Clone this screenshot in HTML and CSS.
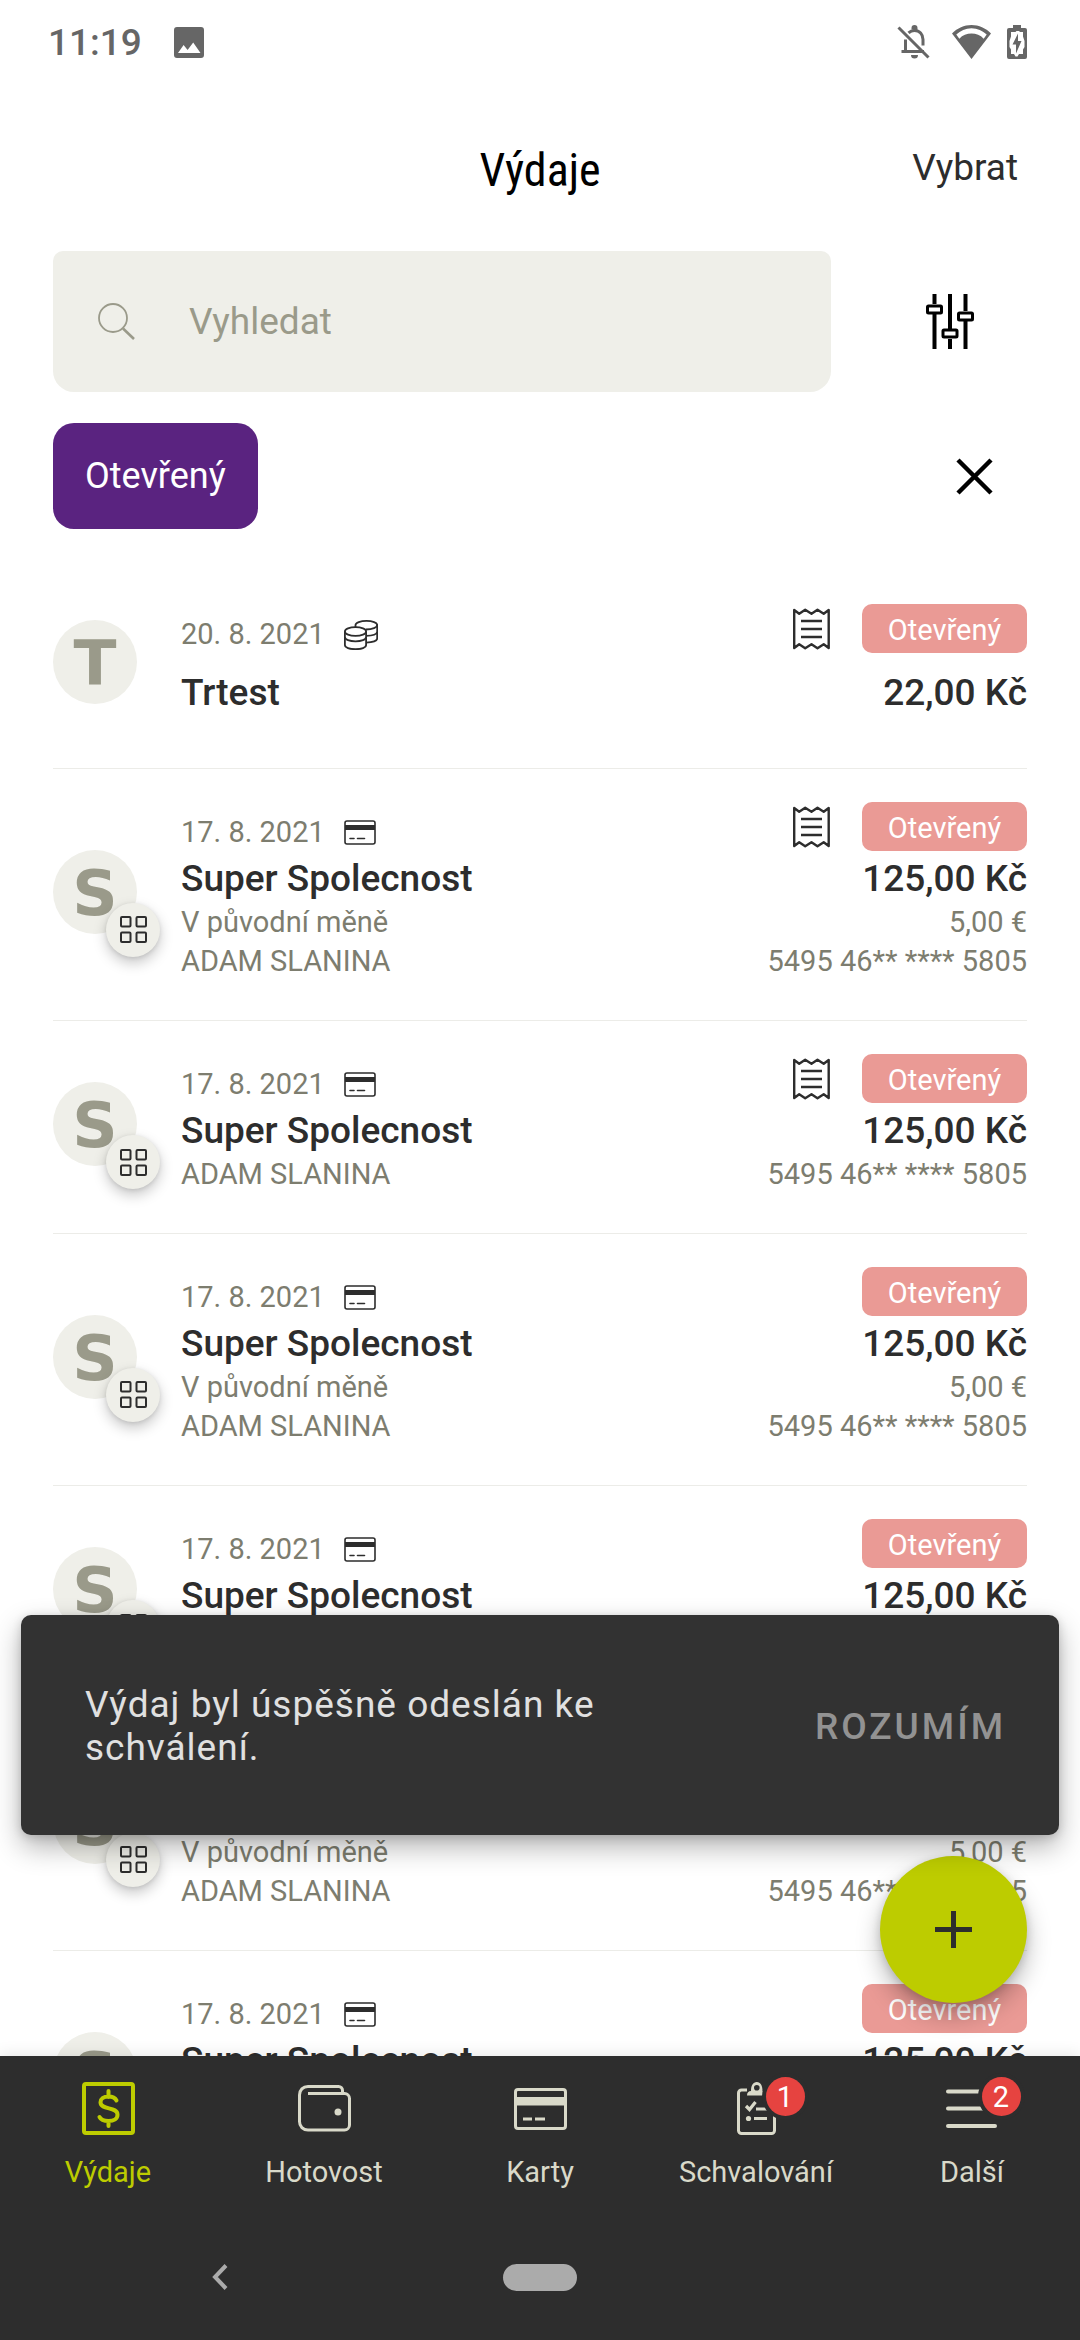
FILE: index.html
```html
<!DOCTYPE html>
<html lang="cs">
<head>
<meta charset="utf-8">
<meta name="viewport" content="width=device-width, initial-scale=1">
<title>Výdaje</title>
<link rel="stylesheet" href="styles.css">
</head>
<body>
<svg class="sprite" aria-hidden="true">
  <symbol id="i-card" viewBox="0 0 32 25">
    <rect x="1" y="1" width="30" height="23" rx="2" fill="none" stroke="currentColor" stroke-width="1.6"/>
    <path d="M1 5h30v5H1z" fill="currentColor"/>
    <path d="M6 18.500h4M13.500 18.500h7" fill="none" stroke="currentColor" stroke-width="1.600" stroke-linecap="round"/>
  </symbol>
  <symbol id="i-coins" viewBox="0 0 34 30">
    <g fill="none" stroke="currentColor" stroke-width="1.800">
      <ellipse cx="11.500" cy="11.500" rx="10.600" ry="4.400"/>
      <path d="M.9 11.500V25c0 2.500 4.700 4.200 10.600 4.200S22.100 27.500 22.100 25V11.500"/>
      <path d="M.9 17c0 2.500 4.700 4.300 10.600 4.300S22.100 19.500 22.100 17"/>
      <path d="M11.500 7.100V5C11.500 2.600 16.500.9 22.500.9S33.200 2.600 33.200 5s-4.500 4.500-11.500 4.500"/>
      <path d="M33.200 5v13.500c0 2.300-4.500 4-11 4.100M33.200 11.500c0 2.500-4.500 4.200-11 4.400"/>
    </g>
  </symbol>
  <symbol id="i-receipt" viewBox="0 0 37 42">
    <path d="M1.200 2l5 3.800 6-4 6.300 4 6-4 6.200 4 5-3.800v38l-5-3.800-6.200 4-6-4-6.300 4-6-4-5 3.800z" fill="none" stroke="currentColor" stroke-width="2.400" stroke-linejoin="round"/>
    <path d="M8 13h21M8 21h21M8 29h21" fill="none" stroke="currentColor" stroke-width="2.400"/>
  </symbol>
  <symbol id="i-grid" viewBox="0 0 27 27">
    <g fill="none" stroke="currentColor" stroke-width="2">
      <rect x="1" y="1" width="9.500" height="9.500" rx="1"/><rect x="16.500" y="1" width="9.500" height="9.500" rx="1"/>
      <rect x="1" y="16.500" width="9.500" height="9.500" rx="1"/><rect x="16.500" y="16.500" width="9.500" height="9.500" rx="1"/>
    </g>
  </symbol>
</svg>

<div class="app">
  <div class="status">
    <span class="status-time">11:19</span>
    <svg class="status-photo" width="30" height="31" viewBox="0 0 30 31"><path fill-rule="evenodd" fill="currentColor" d="M3 0h24a3 3 0 0 1 3 3v25a3 3 0 0 1-3 3H3a3 3 0 0 1-3-3V3a3 3 0 0 1 3-3zM4 26h22.500l-7.300-10.500-5.600 7.500-4-5z"/></svg>
    <div class="status-icons">
      <svg class="status-bell" width="33" height="34" viewBox="0 0 33 34"><g fill="none" stroke="currentColor" stroke-width="3"><path d="M1.500 2.500l30 30"/><path d="M8.500 27V14.500M11.500 7.800c2-1.800 3.500-2.300 6-2.300 5 0 8.500 3.800 8.500 9V20.500M4.500 26.500h22.500" /></g><path fill="currentColor" d="M14.500 4.500V3a3 3 0 0 1 6 0v2.500zM14 30h7a3.500 3.500 0 0 1-7 0z"/></svg>
      <svg width="39" height="34" viewBox="0 0 39 34"><path fill="currentColor" fill-rule="evenodd" d="M19.500 34L0 8.500C5.500 3 12 0 19.500 0S33.500 3 39 8.500zM4.300 9.500l3 4.200C10.500 10 15 8.500 19.500 8.500s9 1.500 12.200 5.200l3-4.200C30.500 5.700 25.500 3.300 19.500 3.300S8.500 5.700 4.300 9.500z"/></svg>
      <svg width="20" height="34" viewBox="0 0 20 34"><path fill="currentColor" fill-rule="evenodd" d="M6 0h8v3h4a2 2 0 0 1 2 2v27a2 2 0 0 1-2 2H2a2 2 0 0 1-2-2V5a2 2 0 0 1 2-2h4zM4 7v4.500L2.500 16v6L4 24.500V29h3l1.500 2.500h2L12 29h4v-4.500l1.500-2.500v-6L16 11.500V7h-3l-1-1H9.500L8.500 7z"/><path fill="currentColor" d="M11 8.500v7.500h3.500L9 28.500v-9H5.500z"/></svg>
    </div>
  </div>

  <header class="header">
    <h1 class="title">Výdaje</h1>
    <button class="select" type="button">Vybrat</button>
  </header>

  <div class="search-row">
    <label class="search">
      <svg width="37" height="37" viewBox="0 0 37 37"><g fill="none" stroke="currentColor"><circle cx="15" cy="15" r="14" stroke-width="1.800"/><path d="M25 25.500L36 36" stroke-width="2.600"/></g></svg>
      <input type="search" placeholder="Vyhledat" aria-label="Vyhledat">
    </label>
    <button class="filter" type="button" aria-label="Filtr">
      <svg width="48" height="55" viewBox="0 0 48 55"><path d="M8.500 0v10M8.500 20v35M24 0v35M24 45v10M39.500 0v17M39.500 27v28" fill="none" stroke="currentColor" stroke-width="4"/><g fill="#fff" stroke="currentColor" stroke-width="3"><rect x="1.500" y="12" width="14" height="7" rx="1"/><rect x="17" y="36" width="14" height="7" rx="1"/><rect x="32.500" y="19" width="14" height="7" rx="1"/></g></svg>
    </button>
  </div>

  <div class="chips">
    <button class="chip" type="button">Otevřený</button>
    <button class="clear" type="button" aria-label="Zrušit filtr">
      <svg width="37" height="37" viewBox="0 0 37 37"><path d="M2 2l33 33M35 2L2 35" fill="none" stroke="currentColor" stroke-width="4.500"/></svg>
    </button>
  </div>

  <main class="content">
    <ul class="list">
      <li class="item item-cash">
        <div class="avatar">T</div>
        <div class="info">
          <div class="line head"><span class="date">20. 8. 2021 <svg width="34" height="30"><use href="#i-coins"/></svg></span><span class="state"><svg width="37" height="42"><use href="#i-receipt"/></svg><span class="badge">Otevřený</span></span></div>
          <div class="line name"><span>Trtest</span><span>22,00 Kč</span></div>
        </div>
      </li>
      <li class="item">
        <div class="avatar">S<span class="mark"><svg width="27" height="27"><use href="#i-grid"/></svg></span></div>
        <div class="info">
          <div class="line head"><span class="date">17. 8. 2021 <svg width="32" height="25"><use href="#i-card"/></svg></span><span class="state"><svg width="37" height="42"><use href="#i-receipt"/></svg><span class="badge">Otevřený</span></span></div>
          <div class="line name"><span>Super Spolecnost</span><span>125,00 Kč</span></div>
          <div class="line sub"><span>V původní měně</span><span>5,00 €</span></div>
          <div class="line sub"><span>ADAM SLANINA</span><span>5495 46** **** 5805</span></div>
        </div>
      </li>
      <li class="item">
        <div class="avatar">S<span class="mark"><svg width="27" height="27"><use href="#i-grid"/></svg></span></div>
        <div class="info">
          <div class="line head"><span class="date">17. 8. 2021 <svg width="32" height="25"><use href="#i-card"/></svg></span><span class="state"><svg width="37" height="42"><use href="#i-receipt"/></svg><span class="badge">Otevřený</span></span></div>
          <div class="line name"><span>Super Spolecnost</span><span>125,00 Kč</span></div>
          <div class="line sub"><span>ADAM SLANINA</span><span>5495 46** **** 5805</span></div>
        </div>
      </li>
      <li class="item">
        <div class="avatar">S<span class="mark"><svg width="27" height="27"><use href="#i-grid"/></svg></span></div>
        <div class="info">
          <div class="line head"><span class="date">17. 8. 2021 <svg width="32" height="25"><use href="#i-card"/></svg></span><span class="state"><span class="badge">Otevřený</span></span></div>
          <div class="line name"><span>Super Spolecnost</span><span>125,00 Kč</span></div>
          <div class="line sub"><span>V původní měně</span><span>5,00 €</span></div>
          <div class="line sub"><span>ADAM SLANINA</span><span>5495 46** **** 5805</span></div>
        </div>
      </li>
      <li class="item">
        <div class="avatar">S<span class="mark"><svg width="27" height="27"><use href="#i-grid"/></svg></span></div>
        <div class="info">
          <div class="line head"><span class="date">17. 8. 2021 <svg width="32" height="25"><use href="#i-card"/></svg></span><span class="state"><span class="badge">Otevřený</span></span></div>
          <div class="line name"><span>Super Spolecnost</span><span>125,00 Kč</span></div>
          <div class="line sub"><span>ADAM SLANINA</span><span>5495 46** **** 5805</span></div>
        </div>
      </li>
      <li class="item">
        <div class="avatar">S<span class="mark"><svg width="27" height="27"><use href="#i-grid"/></svg></span></div>
        <div class="info">
          <div class="line head"><span class="date">17. 8. 2021 <svg width="32" height="25"><use href="#i-card"/></svg></span><span class="state"><span class="badge">Otevřený</span></span></div>
          <div class="line name"><span>Super Spolecnost</span><span>125,00 Kč</span></div>
          <div class="line sub"><span>V původní měně</span><span>5,00 €</span></div>
          <div class="line sub"><span>ADAM SLANINA</span><span>5495 46** **** 5805</span></div>
        </div>
      </li>
      <li class="item">
        <div class="avatar">S<span class="mark"><svg width="27" height="27"><use href="#i-grid"/></svg></span></div>
        <div class="info">
          <div class="line head"><span class="date">17. 8. 2021 <svg width="32" height="25"><use href="#i-card"/></svg></span><span class="state"><span class="badge">Otevřený</span></span></div>
          <div class="line name"><span>Super Spolecnost</span><span>125,00 Kč</span></div>
          <div class="line sub"><span>V původní měně</span><span>5,00 €</span></div>
          <div class="line sub"><span>ADAM SLANINA</span><span>5495 46** **** 5805</span></div>
        </div>
      </li>
    </ul>
    <button class="fab" type="button" aria-label="Přidat výdaj">
      <svg width="37" height="37" viewBox="0 0 37 37"><path d="M18.500 0v37M0 18.500h37" fill="none" stroke="currentColor" stroke-width="5"/></svg>
    </button>
    <div class="snackbar" role="status">
      <p class="snackbar-text">Výdaj byl úspěšně odeslán ke schválení.</p>
      <button class="snackbar-action" type="button">ROZUMÍM</button>
    </div>
  </main>

  <footer class="footer">
    <nav class="tabs">
      <a class="tab tab-active" href="#vydaje">
        <span class="tab-icon"><svg width="53" height="53" viewBox="0 0 53 53"><g fill="none" stroke="currentColor" stroke-width="4"><rect x="2" y="2" width="49" height="49" rx="2"/><path d="M34.500 18.500C33 15.500 30.500 14.500 26.500 14.500c-5 0-8 2.300-8 5.700 0 8.300 17 4 17 12.500 0 4-3.500 6.300-9 6.300-4.500 0-7.500-1-9-4M26.500 9v6M26.500 39v5" stroke-linecap="round"/></g></svg></span>
        Výdaje
      </a>
      <a class="tab" href="#hotovost">
        <span class="tab-icon"><svg width="53" height="47" viewBox="0 0 53 47"><g fill="none" stroke="currentColor" stroke-width="3"><path d="M10 8.500h36.500a5 5 0 0 1 5 5V40a5 5 0 0 1-5 5H10c-5 0-8.500-3.500-8.500-8.500V10c0-5 3.500-8.500 8.500-8.500h30.500a4 4 0 0 1 4 4v3"/></g><circle cx="40" cy="27" r="3.500" fill="currentColor"/></svg></span>
        Hotovost
      </a>
      <a class="tab" href="#karty">
        <span class="tab-icon"><svg width="53" height="42" viewBox="0 0 53 42"><rect x="1.500" y="1.500" width="50" height="39" rx="2.500" fill="none" stroke="currentColor" stroke-width="3"/><path d="M1 9h51v8.500H1z" fill="currentColor"/><path d="M9 31h9M21 31h10" fill="none" stroke="currentColor" stroke-width="3"/></svg></span>
        Karty
      </a>
      <a class="tab" href="#schvalovani">
        <span class="tab-icon"><svg width="39" height="53" viewBox="0 0 39 53"><path d="M10 8H4.500a3 3 0 0 0-3 3v37.500a3 3 0 0 0 3 3h30a3 3 0 0 0 3-3V11a3 3 0 0 0-3-3H29" fill="none" stroke="currentColor" stroke-width="3"/><path fill="currentColor" fill-rule="evenodd" d="M10 13.500c0-3 1.500-4.500 4-4.500C14 3.500 16 0 19.800 0S25.500 3.500 25.500 9c2.500 0 4 1.500 4 4.500zM19.800 8.500a2.800 2.800 0 1 0 0-5.600 2.800 2.800 0 0 0 0 5.600z"/><path d="M9 24l3.500 3.500 6-7.500M19 27h11M17 36.500h13" fill="none" stroke="currentColor" stroke-width="3.200"/><circle cx="11.500" cy="36.500" r="2.600" fill="currentColor"/></svg><span class="count">1</span></span>
        Schvalování
      </a>
      <a class="tab" href="#dalsi">
        <span class="tab-icon"><svg width="53" height="39" viewBox="0 0 53 39"><path d="M2 2.500h47M2 19.500h47M2 37h47" fill="none" stroke="currentColor" stroke-width="4" stroke-linecap="round"/></svg><span class="count">2</span></span>
        Další
      </a>
    </nav>
    <div class="system">
      <button class="back" type="button" aria-label="Zpět"><svg width="16" height="26" viewBox="0 0 16 26"><path d="M14 1.500L3 13l11 11.500" fill="none" stroke="currentColor" stroke-width="4"/></svg></button>
      <button class="home" type="button" aria-label="Domů"></button>
    </div>
  </footer>
</div>
</body>
</html>
```
FILE: styles.css
```css
* { box-sizing: border-box; }

body {
  margin: 0;
  background: #fff;
  color: #2d2d2d;
  font-family: Roboto, "Noto Sans", sans-serif;
  font-size: 37px;
  line-height: 43px;
}

button {
  margin: 0;
  padding: 0;
  border: 0;
  background: none;
  color: inherit;
  font: inherit;
}

svg { display: block; flex: none; }

.sprite { position: absolute; width: 0; height: 0; }

.app {
  display: flex;
  flex-direction: column;
  height: 100vh;
  overflow: hidden;
}

/* Status bar */
.status {
  display: flex;
  align-items: center;
  flex: none;
  height: 84px;
  padding: 0 53px 0 48px;
  color: #666;
}
.status-time { font-weight: 500; }
.status-photo { margin-left: 32px; }
.status-icons {
  display: flex;
  align-items: center;
  margin-left: auto;
  gap: 16px;
}
.status-bell { margin-right: 6px; }

/* Header */
.header {
  display: grid;
  grid-template-columns: 1fr auto 1fr;
  align-items: center;
  flex: none;
  height: 167px;
  padding: 0 62px;
}
.title {
  grid-column: 2;
  margin: 0;
  padding-top: 4px;
  color: #000;
  font: 400 46px/52px "Liberation Sans Narrow", "Roboto Condensed", Roboto, sans-serif;
}
.select { justify-self: end; }

.search-row {
  display: flex;
  flex: none;
  gap: 42px;
  margin: 0 53px 31px;
}
.search {
  display: flex;
  align-items: center;
  flex: 1;
  gap: 54px;
  height: 141px;
  padding: 0 45px;
  border-radius: 10px 10px 21px 21px;
  background: #efefe9;
  color: #9a9a8a;
}
.search input {
  flex: 1;
  min-width: 0;
  padding: 0;
  border: 0;
  outline: 0;
  background: none;
  color: #2d2d2d;
  font: inherit;
}
.search input::placeholder { color: #9a9a8a; opacity: 1; }
.filter {
  display: grid;
  place-items: center;
  width: 154px;
  color: #000;
}

.chips {
  display: flex;
  justify-content: space-between;
  flex: none;
  margin: 0 53px 42px;
}
.chip {
  height: 106px;
  padding: 0 32px;
  border-radius: 21px;
  background: #5a2380;
  color: #fff;
  font-size: 36px;
}
.clear {
  display: grid;
  place-items: center;
  width: 105px;
  color: #000;
}

/* Expense list */
.content {
  position: relative;
  flex: 1;
  min-height: 0;
}
.list {
  height: 100%;
  margin: 0;
  padding: 0 53px;
  overflow: hidden;
  list-style: none;
}
.item {
  display: flex;
  align-items: center;
  gap: 44px;
  padding: 33px 0 39px;
  border-bottom: 1px solid #ecece8;
}
.avatar {
  position: relative;
  flex: none;
  width: 84px;
  height: 84px;
  border-radius: 50%;
  background: #efefe9;
  color: #9a9a8a;
  font: 700 63px/88px "DejaVu Sans", sans-serif;
  text-align: center;
}
.mark {
  position: absolute;
  right: -23px;
  bottom: -23px;
  display: grid;
  place-items: center;
  width: 54px;
  height: 54px;
  border-radius: 50%;
  background: #efefe9;
  box-shadow: 0 6px 14px rgba(0, 0, 0, .22), 0 1px 4px rgba(0, 0, 0, .1);
  color: #2d2d2d;
}
.info { flex: 1; min-width: 0; }
.line {
  display: flex;
  justify-content: space-between;
}
.head {
  align-items: flex-end;
  height: 49px;
  margin-bottom: 4px;
}
.date {
  display: flex;
  align-items: center;
  gap: 19px;
  color: #7d7d6f;
  font-size: 29px;
  line-height: 37px;
}
.date svg { color: #2d2d2d; }
.state {
  display: flex;
  align-items: center;
  gap: 32px;
}
.badge {
  width: 165px;
  height: 49px;
  border-radius: 10px;
  background: #ea9a95;
  color: #fff;
  font-size: 29px;
  line-height: 52px;
  text-align: center;
}
.name { font-weight: 500; line-height: 48px; }
.sub {
  color: #7d7d6f;
  font-size: 29px;
  line-height: 39px;
}
.item-cash { padding-bottom: 49px; }
.item-cash .head { margin-bottom: 14px; }
.item-cash .name { line-height: 52px; }

/* Floating controls */
.fab {
  position: absolute;
  right: 53px;
  bottom: 53px;
  display: grid;
  place-items: center;
  width: 147px;
  height: 147px;
  border-radius: 50%;
  background: #bdcc00;
  box-shadow: 0 12px 24px rgba(0, 0, 0, .28), 0 2px 8px rgba(0, 0, 0, .14);
}
.snackbar {
  position: absolute;
  right: 21px;
  bottom: 221px;
  left: 21px;
  display: flex;
  align-items: center;
  justify-content: space-between;
  gap: 64px;
  padding: 68px 53px 66px 64px;
  border-radius: 10px;
  background: #323232;
  box-shadow: 0 12px 28px rgba(0, 0, 0, .3), 0 2px 10px rgba(0, 0, 0, .16);
  color: #e0e0e0;
}
.snackbar-text {
  flex: 1;
  max-width: 600px;
  margin: 0;
  letter-spacing: 1px;
}
.snackbar-action {
  color: #929292;
  font-weight: 500;
  letter-spacing: 3px;
}

/* Bottom navigation */
.footer {
  position: relative;
  flex: none;
  background: #2d2d2d;
  box-shadow: 0 0 16px rgba(0, 0, 0, .12);
}
.tabs {
  display: grid;
  grid-template-columns: repeat(5, 1fr);
  height: 158px;
}
.tab {
  display: flex;
  flex-direction: column;
  align-items: center;
  gap: 20px;
  padding-top: 26px;
  color: #d9d9c9;
  font-size: 29px;
  line-height: 34px;
  text-decoration: none;
}
.tab-active { color: #bdcc00; }
.tab-icon {
  position: relative;
  display: grid;
  place-items: center;
  width: 53px;
  height: 53px;
}
.count {
  position: absolute;
  top: -5px;
  right: -22px;
  width: 39px;
  height: 39px;
  border-radius: 50%;
  background: #e64340;
  box-shadow: 0 0 0 4px #2d2d2d;
  color: #fff;
  line-height: 40px;
  text-align: center;
}
.system {
  display: grid;
  grid-template-columns: repeat(3, 1fr);
  place-items: center;
  height: 126px;
  padding: 0 60px;
  color: #ababab;
}
.home {
  width: 74px;
  height: 27px;
  border-radius: 14px;
  background: #ababab;
}
```
